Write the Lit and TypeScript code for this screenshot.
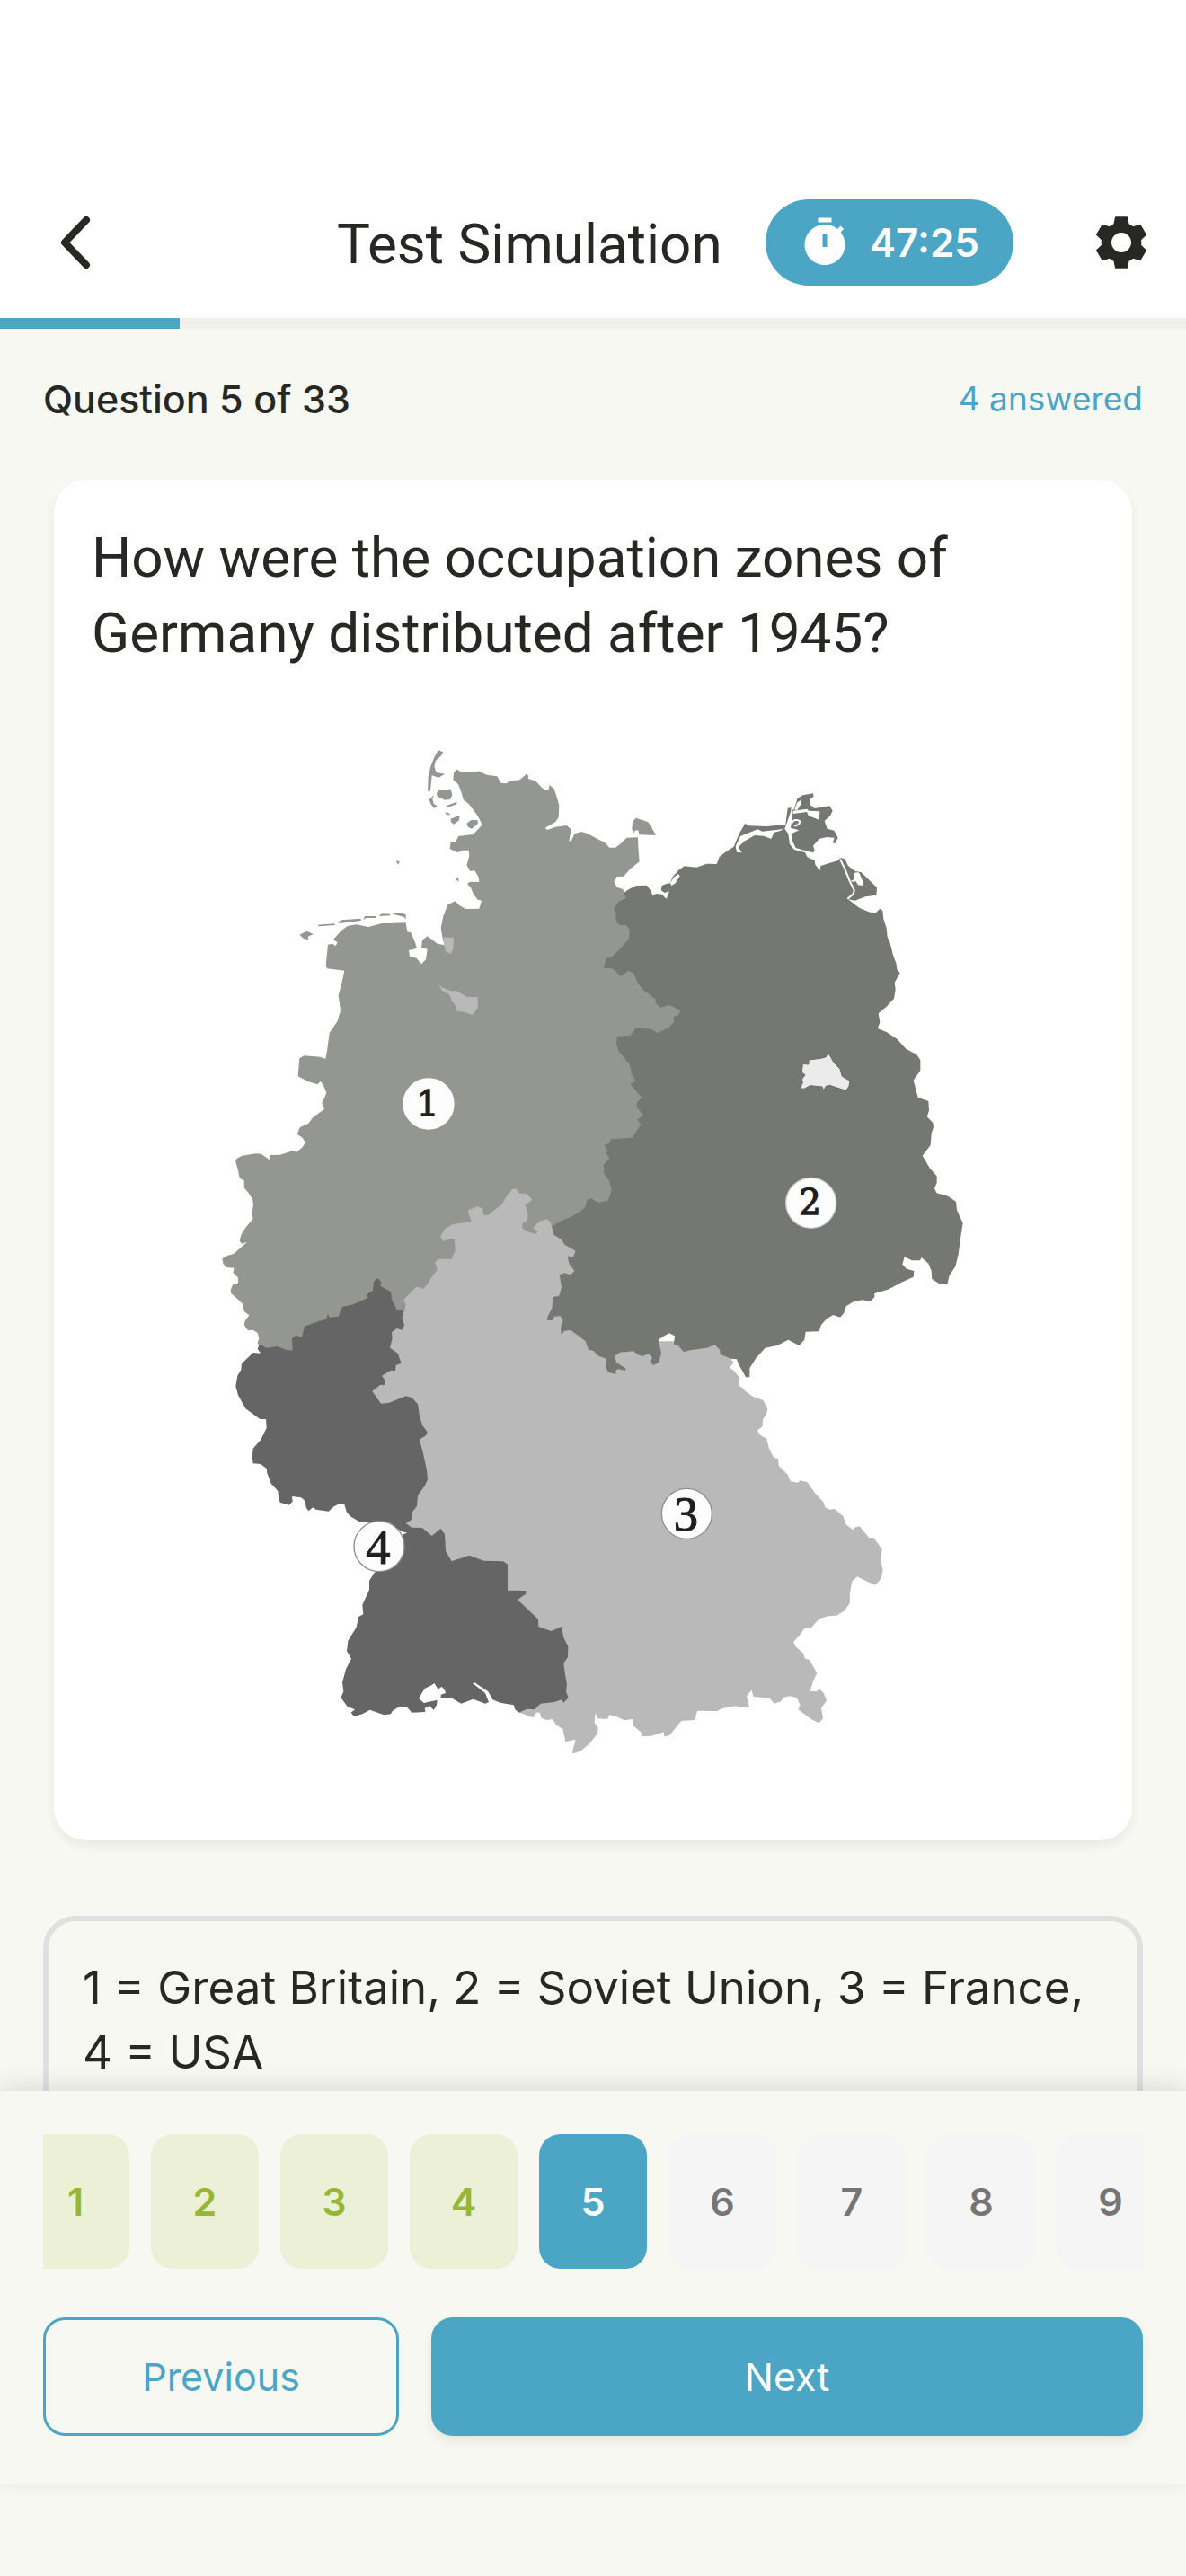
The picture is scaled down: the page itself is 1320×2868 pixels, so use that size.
import { LitElement, html, css, svg } from "lit";
import { customElement, property, state } from "lit/decorators.js";
import { classMap } from "lit/directives/class-map.js";
import { styleMap } from "lit/directives/style-map.js";

type Part = [dx: number, dy: number, points: string];

/** Joins outline parts, each given from its own sheet origin, into one closed path. */
function ring(...parts: Part[]): string {
  const out: string[] = [];
  for (const [dx, dy, points] of parts) {
    for (const pair of points.trim().split(/\s+/)) {
      const [x, y] = pair.split(",").map(Number);
      out.push(`${x + dx} ${y + dy}`);
    }
  }
  return `M${out.join("L")}Z`;
}

const NW: [number, number] = [0, 0];
const NE: [number, number] = [1260, 0];
const W: [number, number] = [0, 1380];
const E: [number, number] = [1260, 1380];
const SW: [number, number] = [0, 2400];
const SE: [number, number] = [1260, 2400];

const ZONE_1 =
  ring(
    [...NW, `855,180 865,170 880,178 940,176 965,188 1000,193 1012,215 1030,217 1045,208 1075,205 1098,185 1105,192
    1103,200 1130,210 1150,232 1165,240 1172,237 1175,222 1190,235 1200,265 1207,290 1205,330 1195,345 1160,365 1168,372
    1195,362 1232,357 1247,370 1240,410 1248,408 1258,385 1280,378 1300,383 1345,407 1360,415 1375,431 1395,431 1410,420
    1432,398 1470,397 1471,430 1475,478 1445,502 1422,527 1400,528 1390,545 1400,563 1420,570 1425,582 1500,600 1700,950
    1700,1050 1600,1300 1450,1650 1300,1750 1200,1800 800,2000 670,2060 400,2200 212,2120`],
    [...W, `205,715 200,705 205,690 200,672 185,662 168,664 155,645 158,632 172,613 155,600 150,575 135,560 112,540
    110,528 118,510 135,506 135,488 118,470 122,455 95,453 85,440 82,424 100,413 120,408 165,368 148,374 140,365 145,345
    160,320 185,290 180,275 186,245 183,225 170,205 155,187 155,163 140,155 135,130 127,100 130,90 148,80 195,73 212,74
    240,94 240,78 275,77 322,62 330,68 350,52 360,36 350,20 332,8`],
    [...NW, `342,1365 370,1352 385,1332 423,1305 415,1285 430,1250 420,1225 410,1212 400,1222 370,1213 335,1195 340,1135
    355,1126 410,1130 427,1137 432,1110 440,1050 467,1010 477,975 470,925 482,880 490,842 432,835 428,825 435,755 450,752
    460,760 467,748 453,738 480,708 500,693 530,688 570,696 615,684 640,684 695,682 700,712 712,715 725,745 732,768
    705,774 708,795 730,800 747,820 762,805 767,770 747,765 750,740 767,727 785,740 800,752 825,757 818,735 812,700
    820,660 835,622 860,610 875,625 895,636 940,635 948,608 935,605 920,585 912,565 900,552 910,545 940,546 938,530
    925,508 910,510 898,490 907,460 905,440 885,440 868,448 842,435 845,412 862,412 870,393 920,387 950,355 935,325
    905,285 888,272 880,245 870,220 853,205`],
  ) +
  ring([...NW, "803,106 820,112 812,125 795,140 790,160 797,180 825,185 805,197 782,190 777,242 768,242 770,195 778,160 790,130"]) +
  ring([...NW, "798,250 805,238 845,236 850,255 843,270 825,272 800,260"]) +
  ring([...NW, "790,255 773,270 778,285 790,300 800,292 788,285 784,268"]) +
  ring([...NW, "830,292 865,278 865,286 835,297"]) +
  ring([...NW, "825,313 838,316 845,322 832,322"]) +
  ring([...NW, "845,335 875,323 873,340 855,353 845,345"]) +
  ring([...NW, "898,350 915,338 935,340 935,352 915,368 903,362"]) +
  ring([...NW, "662,475 675,478 669,488"]) +
  ring([...NW, "862,537 870,530 872,545"]) +
  ring([...NW, "340,722 365,710 386,720 368,728 370,738 355,736"]) +
  ring([...NW, "400,689 458,685 458,690 405,694"]) +
  ring([...NW, "468,682 480,673 545,668 545,675 475,684"]) +
  ring([...NW, "553,672 558,660 595,660 595,666 563,666"]) +
  ring([...NW, "605,660 615,652 643,653 642,658"]) +
  ring([...NW, "650,650 675,648 695,655 695,670 688,662 655,654"]) +
  ring([...NE, "203,332 243,345 255,362 270,390 215,388 210,372 198,376 200,385 190,370 192,345"]);

const ZONE_3 =
  ring(
    [...W, `690,600 695,580 688,560 730,518 742,520 752,525 765,512 785,480 800,462 793,435 805,425 848,425 860,395
    857,358 840,358 820,366 810,350 825,325 850,310 900,302 913,302 910,285 902,270 905,260 935,250 952,258 955,278
    970,278 1015,243 1030,218 1050,192 1065,190 1070,205 1098,207 1118,228 1093,245 1103,275 1100,298 1085,305 1083,322
    1105,335 1130,342 1135,332 1120,322 1140,300 1165,292 1178,300 1182,316 1400,400 1500,700 1740,700`],
    [...E, `520,758 530,772 515,788 530,797 550,822 547,848 558,855 570,868 595,885 628,897 643,925 640,940 627,962
    626,985 608,998 620,1015 640,1025 647,1055 663,1088 678,1092 680,1115 710,1145 720,1168 745,1172 750,1165 775,1170
    800,1205 830,1238 835,1255 850,1262 868,1260 895,1285 905,1312 928,1330 932,1322 950,1318 982,1357 997,1356
    1025,1395 1020,1430`],
    [...SE, `1028,445 1020,475 1003,494 975,482 942,466 925,482 918,520 917,555 900,580 873,596 845,598 815,607 790,635
    765,640 750,662 730,683 735,698 762,722 768,740 782,743 808,788 795,815 785,848 805,850 818,842 830,855 840,880
    822,905 828,940 815,955 790,943 745,910 752,895 740,870 715,865 695,870 688,882 665,890 650,872 595,866 590,845
    573,865 582,902 555,903 535,898 490,907 475,915 408,914 400,945 355,948 315,997 297,1000 297,985 255,998 222,1000
    220,985 192,962 195,942 165,946 135,932 115,928 108,942 75,940 68,920 65,955 77,970 75,990 50,1022 20,1048 0,1055`],
    [...SW, `1250,1055 1262,1010 1228,1018 1222,990 1220,975 1198,963 1185,942 1165,945 1148,938 1142,920 1130,920
    1120,937 1075,920 1060,880 1000,700 900,500 760,400 712,320 690,285 650,200 620,0`],
    [...W, "560,850 600,700"],
  ) +
  ring([...NW, "820,730 855,732 853,770 845,785 830,780 822,755"]) +
  ring([...NW, "805,885 815,897 845,910 865,910 900,930 935,930 935,965 918,990 890,980 863,977 862,960 850,945 840,922 815,908"]);

const ZONE_2 = ring(
  [...NE, `163,582 180,570 205,558 240,557 255,578 258,592 270,585 290,587 305,602 315,577 300,582 287,574 290,558
  305,552 318,550 325,530 345,507 365,493 405,497 440,485 473,486 482,462 500,448 530,428 548,385 568,350 578,358
  640,360 703,354 710,300 722,297 720,308 732,302 742,268 760,256 795,250 797,260 783,270 785,288 800,300 850,292
  860,308 852,325 833,342 842,368 865,374 878,398 868,417 860,415 866,398 840,396 815,402 795,425 800,440 795,448
  765,440 775,462 785,468 800,472 802,488 818,508 820,492 878,474 885,466 900,468 912,492 935,510 955,513 985,542
  1008,565 1006,590 970,595 935,608 912,604 950,633 985,647 1005,648 1018,635 1027,642 1030,670 1040,700 1043,730
  1052,750 1062,790 1073,820 1075,838 1085,850 1067,882 1070,905 1065,935 1040,962 1013,985 1018,1015 1010,1035
  1040,1047 1075,1070 1105,1103 1140,1122 1153,1140 1153,1175 1130,1208 1145,1265 1180,1278 1182,1310 1175,1330
  1195,1350 1197,1365 1190,1385 1187,1425`],
  [...E, `1160,80 1185,122 1208,148 1208,170 1200,190 1208,205 1245,215 1272,233 1275,262 1295,305 1285,370 1280,410
  1270,450 1250,480 1243,510 1215,507 1192,492 1190,465 1180,440 1157,420 1152,430 1125,430 1100,418 1093,443 1107,458
  1132,465 1130,485 1090,503 1045,527 1000,540 1000,553 985,567 960,562 930,568 905,583 898,605 885,620 862,612
  840,625 822,645 815,667 770,668 766,695 748,714 712,695 675,714 635,722 605,755 583,790 583,820 570,820 562,805
  545,775 540,760 520,758 485,743 483,728 467,712 440,722 385,730 362,735 345,715 330,710 333,682 315,673 295,683
  278,695 288,740 280,770 262,780 250,768 258,755 245,742 225,750 210,745 195,733 150,737 132,750 138,770 170,792
  168,798 145,793 135,797 137,810 110,803 103,785 105,758 75,748 62,732 45,728 35,700 10,680`],
  [...W, `1245,663 1225,665 1213,678 1213,650 1220,630 1210,615 1190,618 1185,630 1168,630 1168,618 1183,590 1187,552
  1207,548 1215,520 1208,478 1225,472 1245,478 1258,465 1240,440 1235,415 1253,420 1262,398 1225,377 1215,360 1190,345
  1182,316 1220,295 1250,283 1280,265 1295,250 1300,228 1315,222 1335,237 1370,230 1382,195 1375,165 1357,140 1355,110
  1375,88 1362,70 1370,65 1357,45 1375,38 1378,25 1450,20`],
  [...NE, `200,1385 220,1355 208,1340 228,1325 205,1295 208,1280 223,1267 200,1240 185,1220 203,1210 190,1190 182,1155
  145,1110 138,1085 140,1062 185,1058 205,1032 255,1038 275,1050 312,1033 330,1015 330,995 345,990 352,975 315,957
  285,965 270,950 268,937 230,908 210,885 195,850 178,843 152,860 125,835 95,833 105,800 120,798 150,770 180,735
  183,705 170,690 150,690 137,678 137,655 130,635 145,612 170,600`],
);

const LAGOONS =
  ring([...NE, "536,427 552,393 580,382 610,370 625,377 690,370 698,368 685,375 665,380 655,402 630,392 600,390 565,410 545,430 557,448 540,446"]) +
  ring([...NE, "704,358 712,335 722,305 727,325 722,352 720,365 748,373 722,385 724,405 737,432 780,445 778,450 732,438 717,420 712,385 700,368"]) +
  ring([...NE, "727,318 728,308 775,302 780,308 817,310 815,338 780,325 774,312"]) +
  ring([...NE, "733,305 742,280 757,271 752,290 742,305"]) +
  ring([...NE, "930,515 948,514 962,545 962,558 945,556 938,544 918,545 932,536"]) +
  ring([...NE, "318,550 330,530 345,519 350,526 335,550 322,558"]);

const BERLIN = ring([...NE, `845,1115 865,1150 885,1170 892,1195 918,1210 915,1228 905,1243 850,1225 838,1228 830,1242
  825,1230 785,1226 765,1237 752,1235 760,1215 757,1205 768,1190 757,1182 760,1153 780,1155 780,1140 820,1135 838,1130`]);

const ZONE_4 = ring(
  [...W, `205,713 215,713 228,722 265,717 300,730 317,730 315,690 328,680 348,686 357,650 385,640 430,625 435,608
  440,620 470,617 483,585 520,577 568,555 565,543 585,530 588,500 600,490 613,500 610,515 645,535 648,560 665,595
  685,597 683,625 690,645 683,662 665,657 648,670 650,690 642,722 668,740 680,773 662,780 660,798 645,797 615,815
  625,830 623,847 610,845 583,867 612,908 640,905 695,883 715,888 735,910 740,945 750,980 767,1003 762,1015 740,1028
  752,1070 765,1130 768,1160 760,1180 735,1215 732,1250 717,1270 715,1295 695,1308 715,1322 750,1323 782,1350 812,1325
  825,1345 828,1400 848,1435 907,1415 955,1433 1020,1435 1035,1445`],
  [...SW, `1035,512 1097,513 1095,525 1068,543 1137,608 1138,633 1180,648 1215,633 1222,670 1237,700 1236,735 1222,755
  1228,800 1233,825 1230,850 1238,870 1222,887 1215,877 1190,885 1145,890 1125,910 1100,908 1072,920 1060,910
  1055,895 1010,887 985,877 970,850 925,820 918,822 960,855 972,885 960,890 920,875 880,890 850,873 812,870 812,860
  828,855 825,845 815,833 803,842 790,822 782,828 758,840 738,872 755,888 800,878 798,895 788,912 775,898 758,905
  760,918 715,920 700,903 675,899 650,915 645,925 622,928 575,911 550,925 522,933 512,920 525,910 500,900 478,870
  487,850 483,820 495,775 513,740 498,715 502,680 530,635 537,600 553,592 550,560 573,510 573,480 590,452 630,440
  685,370 685,325 700,320 680,315 640,285 570,285 540,283 510,265 497,250 490,225 475,222 455,232 437,248 395,242
  385,235 370,247 362,235 358,212 345,202 315,198 317,215 305,227 275,218 270,200 268,180 245,155 232,120 230,105
  210,90 185,88 182,65 185,38`],
  [...W, "210,1030 230,990 228,960 208,960 160,925 135,880 127,850 133,815 145,795 147,775 185,738 210,740 200,725"],
);

const MARKERS = [
  { n: 1, x: 771, y: 1287, base: 1326, small: true, edge: "#ffffff" },
  { n: 2, x: 2048, y: 1618, base: 1657, small: true, edge: "#c9cac9" },
  { n: 3, x: 1633, y: 2656, base: 2711, small: false, edge: "#8e8e8e" },
  { n: 4, x: 606, y: 2765, base: 2824, small: false, edge: "#8e8e8e" },
];

@customElement("zone-map")
export class ZoneMap extends LitElement {
  static styles = css`
    :host { display: block; }
    .map { display: block; width: 100%; height: auto; }
    .zone1 { fill: #949692; }
    .zone2 { fill: #757773; }
    .zone3 { fill: #b9b9b9; }
    .zone4 { fill: #656565; }
    .water { fill: #ffffff; }
    .channel { fill: none; stroke: #ffffff; stroke-width: 6; stroke-linejoin: round; }
    .berlin { fill: #ebebeb; stroke: #686a66; stroke-width: 3; stroke-linejoin: round; }
    .disc { fill: #fdfdfd; stroke-width: 4; }
    .digit {
      fill: #1f1f1f; stroke: #1f1f1f; stroke-width: 3; text-anchor: middle;
      font-family: "Liberation Serif", serif; font-size: 164px;
    }
    .digit.small { font-family: "DejaVu Serif", serif; font-size: 116px; stroke-width: 4; }
  `;

  render() {
    return html`
      <svg class="map" viewBox="-354 -24 3348 3645" role="img" aria-label="Map of Germany with four occupation zones">
        <path class="zone1" d=${ZONE_1}></path>
        <path class="zone3" d=${ZONE_3}></path>
        <path class="zone2" d=${ZONE_2}></path>
        <path class="water" d=${LAGOONS}></path>
        <path class="channel" d="M2145 470L2160 500L2178 545L2192 572L2190 585L2170 602"></path>
        <path class="channel" d="M1984 350Q1990 332 2012 343Q2008 358 1992 358"></path>
        <path class="berlin" d=${BERLIN}></path>
        <path class="zone4" d=${ZONE_4}></path>
        ${MARKERS.map(
          (m) => svg`
            <circle class="disc" cx=${m.x} cy=${m.y} r="84" stroke=${m.edge}></circle>
            <text class=${m.small ? "digit small" : "digit"} x=${m.x - 3} y=${m.base}>${m.n}</text>`,
        )}
      </svg>
    `;
  }
}

@customElement("question-strip")
export class QuestionStrip extends LitElement {
  @property({ type: Number }) count = 0;
  @property({ type: Number }) current = 1;
  @property({ attribute: false }) answered = new Set<number>();

  static styles = css`
    :host { display: block; min-width: 0; }
    .strip { display: flex; gap: 24px; overflow-x: auto; scrollbar-width: none; }
    .chip {
      flex: none; width: 120px; height: 150px; padding: 0; border: 0; border-radius: 24px;
      background: #f5f5f5; color: #757575;
      font: 600 43px/60px Inter, "Liberation Sans", sans-serif;
    }
    .chip.answered { background: #ebf0d7; color: #95b735; }
    .chip.current { background: #4ba5c4; color: #ffffff; }
  `;

  updated() {
    const strip = this.renderRoot.querySelector<HTMLElement>(".strip")!;
    const chip = this.renderRoot.querySelector<HTMLElement>(".current");
    if (!chip) return;
    const from = strip.getBoundingClientRect();
    const to = chip.getBoundingClientRect();
    strip.scrollLeft += to.left + to.width / 2 - (from.left + from.width / 2);
  }

  private pick(n: number) {
    this.dispatchEvent(new CustomEvent("pick", { detail: n }));
  }

  render() {
    return html`
      <nav class="strip" aria-label="Questions">
        ${Array.from({ length: this.count }, (_, i) => i + 1).map(
          (n) => html`<button
            class=${classMap({ chip: true, answered: this.answered.has(n) && n !== this.current, current: n === this.current })}
            @click=${() => this.pick(n)}
          >${n}</button>`,
        )}
      </nav>
    `;
  }
}

@customElement("app-root")
export class AppRoot extends LitElement {
  @state() private current = 5;
  @state() private chosen = false;
  private total = 33;
  private answered = new Set([1, 2, 3, 4]);

  static styles = css`
    :host {
      display: flex; flex-direction: column; height: 100vh;
      background: #f7f8f2; color: #272824;
      font-family: Inter, "Liberation Sans", sans-serif;
    }
    * { box-sizing: border-box; }
    button { font-family: inherit; cursor: pointer; }
    .header {
      flex: none; display: flex; align-items: center; gap: 48px;
      padding-top: 186px; background: #ffffff;
    }
    .icon-button {
      flex: none; display: grid; place-items: center; width: 144px; height: 168px;
      padding: 0; border: 0; background: none; color: inherit;
    }
    .back { width: 168px; }
    .icon { display: block; width: 60px; height: 60px; }
    .title, .question {
      font-family: Roboto, "Liberation Sans", sans-serif; font-size: 62px; line-height: 84px; font-weight: 400;
    }
    .title { flex: 1; margin: 0; padding-top: 4px; text-align: right; }
    .timer {
      flex: none; display: flex; align-items: center; gap: 20px; height: 96px; padding: 0 38px 0 36px;
      border-radius: 48px; background: #4ba5c4; color: #ffffff;
      font-size: 44px; line-height: 60px; font-weight: 600;
    }
    .track { flex: none; height: 12px; background: #eff0eb; }
    .fill { height: 100%; background: #4ba5c4; }
    .content { flex: 1; min-height: 0; overflow-y: auto; scrollbar-width: none; padding: 48px 48px 0; }
    .status { display: flex; justify-content: space-between; align-items: center; line-height: 60px; }
    .position { font-size: 43px; font-weight: 500; }
    .answered { font-size: 37px; color: #4ba5c4; }
    .card {
      margin: 60px 12px 84px; padding: 45px 42px 42px; border-radius: 36px; background: #ffffff;
      box-shadow: 0 6px 12px rgba(39, 40, 36, 0.07);
    }
    .question { margin: 0 0 45px; }
    .option {
      display: block; width: 100%; padding: 38px; border: 6px solid #e0e0e0; border-radius: 36px;
      background: none; color: inherit; text-align: left; font-size: 51px; line-height: 72px;
    }
    .option.chosen { border-color: #4ba5c4; }
    .bar {
      flex: none; position: relative; display: flex; flex-direction: column; gap: 54px;
      padding: 48px 48px 54px; margin-bottom: 102px; background: #f7f8f2;
      box-shadow: 0 -6px 24px rgba(39, 40, 36, 0.12);
    }
    .actions { display: grid; grid-template-columns: 1fr 2fr; gap: 36px; }
    .action {
      height: 132px; padding: 0; border: 3px solid #4ba5c4; border-radius: 24px;
      background: none; color: #4ba5c4; font-size: 43px; line-height: 60px; font-weight: 400;
    }
    .action.primary { background: #4ba5c4; color: #ffffff; box-shadow: 0 6px 12px rgba(39, 40, 36, 0.08); }
  `;

  private go(n: number) {
    this.current = Math.min(this.total, Math.max(1, n));
  }

  render() {
    const progress = { width: `${(this.current / this.total) * 100}%` };
    return html`
      <header class="header">
        <button class="icon-button back" aria-label="Back">
          <svg class="icon" viewBox="0 0 60 60" fill="none" stroke="currentColor" stroke-width="8" stroke-linecap="round" stroke-linejoin="round">
            <path d="M42 5L18 30L42 55"></path>
          </svg>
        </button>
        <h1 class="title">Test Simulation</h1>
        <div class="timer" role="timer">
          <svg class="icon" viewBox="0 0 24 24" fill="currentColor" fill-rule="evenodd" aria-hidden="true">
            <path d="M15 1H9v2h6V1zm-4 13h2V8h-2v6zm8.03-6.61 1.42-1.42c-.43-.51-.9-.99-1.41-1.41l-1.42 1.42C16.07 4.74 14.12 4 12 4c-4.97 0-9 4.03-9 9s4.02 9 9 9 9-4.03 9-9c0-2.12-.74-4.07-1.97-5.61z"></path>
          </svg>
          <span>47:25</span>
        </div>
        <button class="icon-button" aria-label="Settings">
          <svg class="icon" viewBox="-90 -90 180 180" fill="currentColor" stroke="currentColor" stroke-width="4" stroke-linejoin="round">
            <path fill-rule="evenodd" d="M-24 -60L-19 -84H19L24 -60Q31 -58 39 -51L63 -58L82 -26L64 -9Q66 0 64 9L82 26L63 58L39 51Q31 58 24 60L19 84H-19L-24 60Q-31 58 -39 51L-63 58L-82 26L-64 9Q-66 0 -64 -9L-82 -26L-63 -58L-39 -51Q-31 -58 -24 -60ZM0 -35A35 35 0 1 0 0 35A35 35 0 1 0 0 -35Z"></path>
          </svg>
        </button>
      </header>
      <div class="track"><div class="fill" style=${styleMap(progress)}></div></div>
      <main class="content">
        <div class="status">
          <span class="position">Question ${this.current} of ${this.total}</span>
          <span class="answered">${this.answered.size} answered</span>
        </div>
        <section class="card">
          <h2 class="question">How were the occupation zones of Germany distributed after 1945?</h2>
          <zone-map></zone-map>
        </section>
        <button
          class=${classMap({ option: true, chosen: this.chosen })}
          aria-pressed=${this.chosen ? "true" : "false"}
          @click=${() => (this.chosen = !this.chosen)}
        >1 = Great Britain, 2 = Soviet Union, 3 = France, 4 = USA</button>
      </main>
      <footer class="bar">
        <question-strip
          .count=${9}
          .current=${this.current}
          .answered=${this.answered}
          @pick=${(e: CustomEvent<number>) => this.go(e.detail)}
        ></question-strip>
        <div class="actions">
          <button class="action" @click=${() => this.go(this.current - 1)}>Previous</button>
          <button class="action primary" @click=${() => this.go(this.current + 1)}>Next</button>
        </div>
      </footer>
    `;
  }
}
